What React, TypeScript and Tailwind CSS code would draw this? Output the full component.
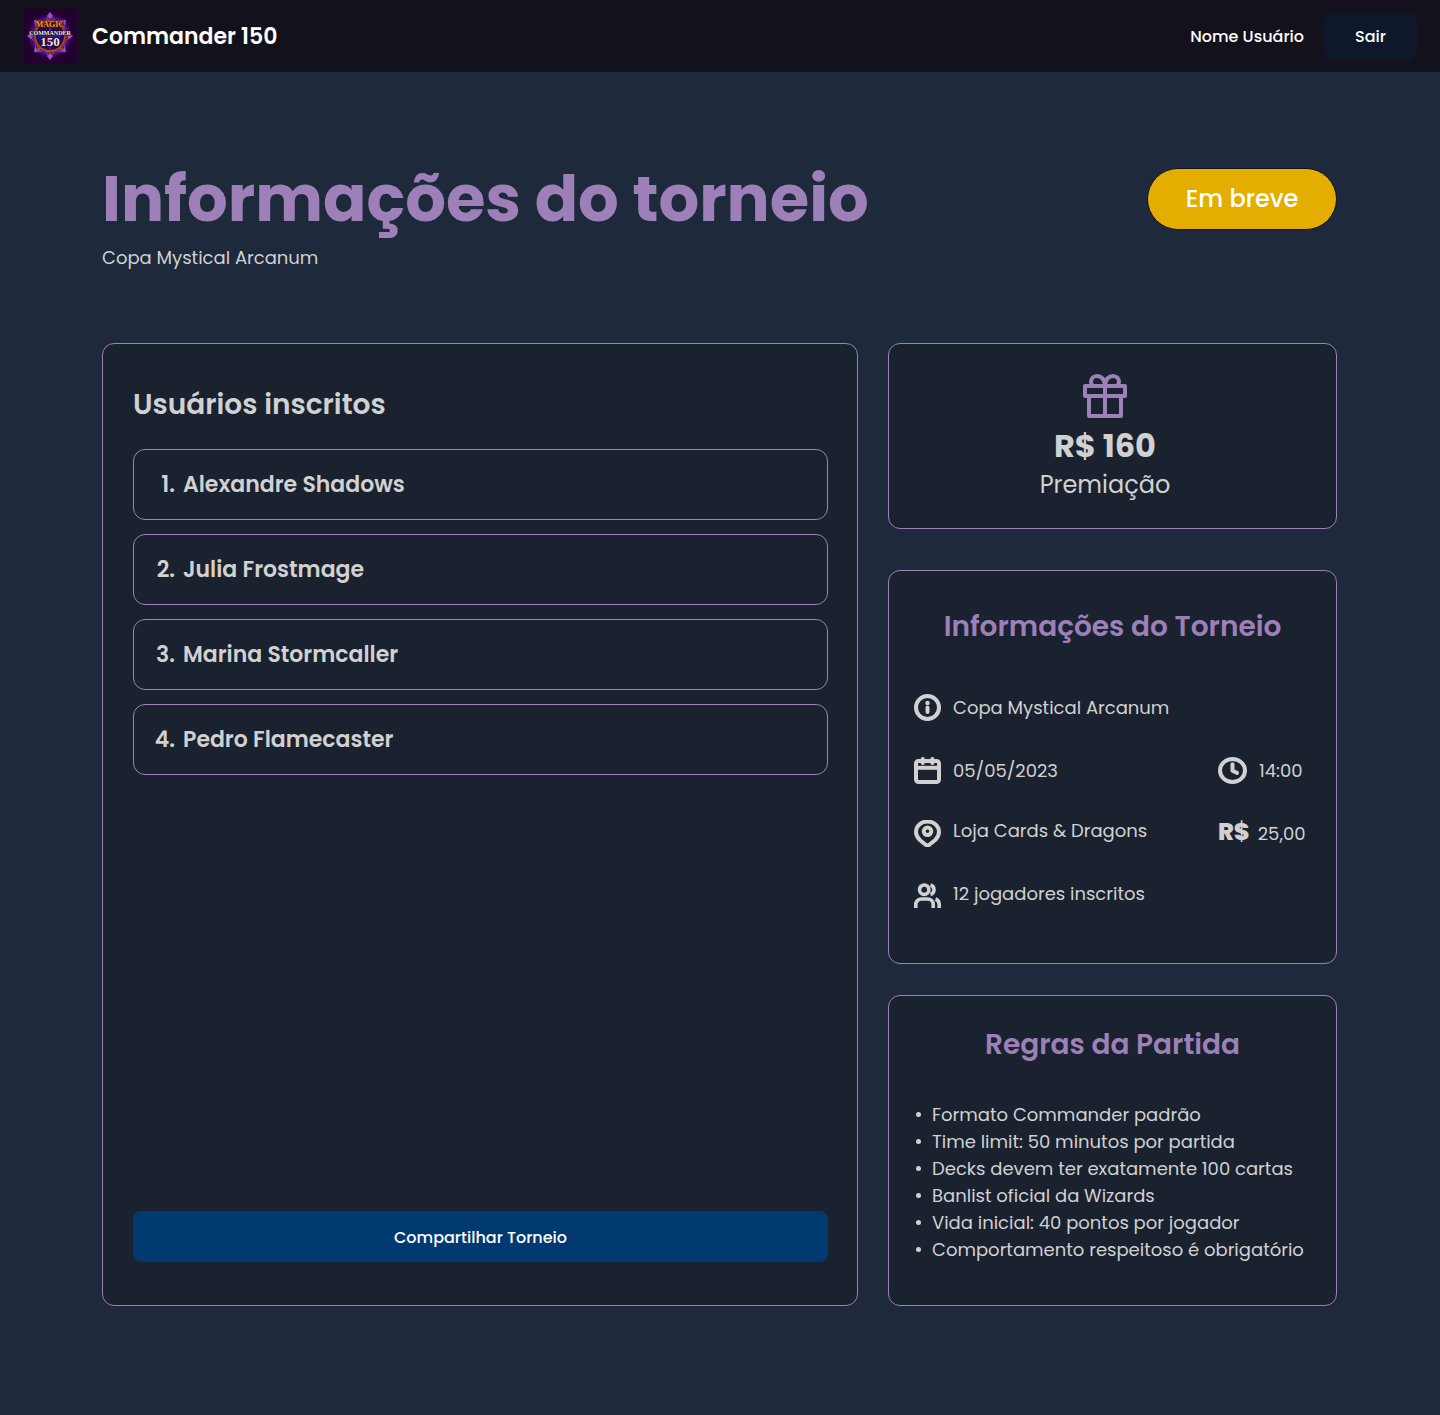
import type { ReactNode } from "react";

const players = ["Alexandre Shadows", "Julia Frostmage", "Marina Stormcaller", "Pedro Flamecaster"];

const rules = [
  "Formato Commander padrão",
  "Time limit: 50 minutos por partida",
  "Decks devem ter exatamente 100 cartas",
  "Banlist oficial da Wizards",
  "Vida inicial: 40 pontos por jogador",
  "Comportamento respeitoso é obrigatório",
];

function Logo() {
  return (
    <svg viewBox="0 0 54 54" className="size-[54px] shrink-0" role="img" aria-label="Magic Commander 150">
      <defs>
        <radialGradient id="glow">
          <stop offset="0" stopColor="#3a0a78" />
          <stop offset="0.6" stopColor="#5a16c4" />
          <stop offset="0.85" stopColor="#4a0f96" stopOpacity="0.7" />
          <stop offset="1" stopColor="#220030" stopOpacity="0" />
        </radialGradient>
      </defs>
      <rect width="54" height="54" fill="#220030" />
      <circle cx="27" cy="27" r="23" fill="url(#glow)" />
      <path d="M27 5l5 7 10-1-1 10 8 6-8 6 1 10-10-1-5 7-5-7-10 1 1-10-8-6 8-6-1-10 10 1z" fill="none" stroke="#8a3a9c" strokeWidth="1" />
      <circle cx="27" cy="27" r="15" fill="#260a55" stroke="#a3481d" strokeWidth="2" />
      <circle cx="27" cy="27" r="16.5" fill="none" stroke="#7a3028" strokeWidth="1.4" strokeDasharray="3 2" />
      <path d="M27 14v26M16 27h22" stroke="#6a22dc" strokeWidth="1.2" />
      <g fill="#a44fc4">
        <path d="M27 3l3 4-3 3-3-3zM27 44l3 3-3 4-3-4zM4 27l4-3 2 3-2 3zM50 27l-4-3-2 3 2 3z" />
        <path d="M11 11l5 1-4 4zM43 11l-5 1 4 4zM11 43l5-1-4-4zM43 43l-5-1 4-4z" />
      </g>
      <g fill="#b0562a">
        <path d="M24 10l3 3 3-3 1 3h-8zM24 44l3-3 3 3 1-3h-8z" />
        <path d="M14 38l4 2-2 2zM40 38l-4 2 2 2zM14 16l3-2-1-2zM40 16l-3-2 1-2z" />
      </g>
      <g textAnchor="middle" fontFamily="'Liberation Serif', serif" fontWeight="700" strokeLinejoin="round" paintOrder="stroke">
        <text x="27" y="18" fontSize="8" fill="#f59a23" stroke="#3a1010" strokeWidth="1">MAGIC</text>
        <text x="27" y="26" fontSize="6" fill="#f3eef3" stroke="#150820" strokeWidth="1">COMMANDER</text>
        <text x="27" y="37" fontSize="13" fill="#f1e6d6" stroke="#150820" strokeWidth="1">150</text>
      </g>
    </svg>
  );
}

function GiftIcon() {
  return (
    <svg viewBox="0 0 44 44" className="size-11" fill="none" stroke="#9d80b8" strokeWidth="4" aria-hidden="true">
      <path d="M2 12h40v10H2zM6 22v20h32V22M22 12v30" strokeLinejoin="round" />
      <path d="M22 11C21 5 18 2 14 2C10 2 8 5 8 8C8 10 9 11 10 12M22 11C23 5 26 2 30 2C34 2 36 5 36 8C36 10 35 11 34 12" />
    </svg>
  );
}

function InfoIcon() {
  return (
    <svg viewBox="0 0 27 27" className="size-[27px]" fill="none" stroke="currentColor" strokeWidth="4" strokeLinecap="round" aria-hidden="true">
      <circle cx="13.5" cy="13.5" r="11.5" />
      <path d="M13.5 13.5v4.500" />
      <circle cx="13.5" cy="9" r="2.200" fill="currentColor" stroke="none" />
    </svg>
  );
}

function CalendarIcon() {
  return (
    <svg viewBox="0 0 27 27" className="size-[27px]" fill="none" stroke="currentColor" strokeWidth="4" strokeLinejoin="round" strokeLinecap="round" aria-hidden="true">
      <rect x="2" y="4" width="23" height="21" rx="2.500" />
      <path d="M2 10.800h23" strokeLinecap="butt" />
      <path d="M8.800 2v4M18.300 2v4" />
    </svg>
  );
}

function PinIcon() {
  return (
    <svg viewBox="0 0 27 27" className="size-[27px]" fill="none" stroke="currentColor" strokeWidth="4" strokeLinejoin="round" aria-hidden="true">
      <path d="M13.500 1.500C7 1.500 2 6 2 12c0 3.200 1.600 5.800 3.800 8l6.200 5q1.500 1 3 0l6.200-5C23.400 17.800 25 15.200 25 12C25 6 20 1.500 13.500 1.500z" />
      <circle cx="13.500" cy="11.300" r="3.800" />
    </svg>
  );
}

function UsersIcon() {
  return (
    <svg viewBox="0 0 27 27" className="size-[27px]" fill="none" stroke="currentColor" strokeWidth="3.600" aria-hidden="true">
      <circle cx="10.200" cy="6.700" r="4.700" />
      <path d="M1.800 25v-3.500a5.500 5.500 0 0 1 5.500-5.500h6.400a5.500 5.500 0 0 1 5.500 5.500v3.500" />
      <path d="M16.500 2a4.900 4.900 0 0 1 0 9.400M21.500 16c2.600.9 3.700 3 3.700 5.500v3.500" />
    </svg>
  );
}

function ClockIcon() {
  return (
    <svg viewBox="0 0 29 27" className="h-[27px] w-[29px]" fill="none" stroke="currentColor" strokeWidth="4" strokeLinecap="round" strokeLinejoin="round" aria-hidden="true">
      <ellipse cx="14.500" cy="13.500" rx="12.500" ry="11.500" />
      <path d="M14.500 7.200v6.500l4.500 2.200" />
    </svg>
  );
}

function Card({ children, className }: { children: ReactNode; className: string }) {
  return <section className={`rounded-xl border border-[#9d80b8] bg-[#1a2230] ${className}`}>{children}</section>;
}

function Info({ icon, raised, children }: { icon: ReactNode; raised?: boolean; children: ReactNode }) {
  return (
    <div className={raised ? "flex items-start gap-3 leading-[22px]" : "flex items-center gap-3"}>
      {icon}
      <span>{children}</span>
    </div>
  );
}

export default function App() {
  return (
    <div className="min-h-screen bg-[#1e293b] font-[Poppins,Inter,sans-serif] text-[#d1d1d1]">
      <header className="flex h-[72px] items-center justify-between bg-[#13111c] px-[23px] text-white">
        <div className="flex items-center gap-[15px]">
          <Logo />
          <span className="text-[22px] font-semibold">Commander 150</span>
        </div>
        <div className="flex items-center gap-5">
          <span className="pt-0.5 text-base font-medium">Nome Usuário</span>
          <button type="button" className="h-[47px] w-[93px] rounded-lg bg-[#0f172a] pt-0.5 text-base font-medium">Sair</button>
        </div>
      </header>

      <main className="pt-[89px] pr-[103px] pb-[109px] pl-[102px]">
        <div className="flex items-start justify-between">
          <div>
            <h1 className="text-[64px] leading-[76px] font-bold text-[#9d80b8]">Informações do torneio</h1>
            <p className="mt-[7px] text-lg leading-[27px]">Copa Mystical Arcanum</p>
          </div>
          <span className="mt-[7px] flex h-[62px] w-[190px] items-center justify-center rounded-full border border-[#14111d] bg-[#e3ae00] text-2xl font-medium text-white">
            Em breve
          </span>
        </div>

        <div className="mt-[72px] grid grid-cols-[minmax(0,756fr)_minmax(0,449fr)] gap-[30px]">
          <Card className="flex flex-col pt-[39px] pr-[29px] pb-[43px] pl-[30px]">
            <h2 className="text-[28px] leading-[44px] font-semibold">Usuários inscritos</h2>
            <ol className="mt-[22px] flex flex-col gap-[14px]">
              {players.map((name, i) => (
                <li key={name} className="flex h-[71px] items-center gap-2 rounded-xl border border-[#9d80b8] pl-5 text-[22px] font-semibold">
                  <span className="w-[21px] text-right">{i + 1}.</span>
                  <span>{name}</span>
                </li>
              ))}
            </ol>
            <button type="button" className="mt-auto h-[51px] rounded-lg bg-[#003a70] pt-0.5 text-base font-medium text-white">
              Compartilhar Torneio
            </button>
          </Card>

          <div className="flex flex-col">
            <Card className="flex flex-col items-center pt-[30px] pr-[15px] pb-[25px]">
              <GiftIcon />
              <strong className="mt-2 text-[32px] leading-[40px] font-bold">R$ 160</strong>
              <span className="text-2xl leading-[37px]">Premiação</span>
            </Card>

            <Card className="mt-[41px] px-[25px] pt-[34px] pb-[53px]">
              <h2 className="text-center text-[28px] leading-[44px] font-semibold text-[#9d80b8]">Informações do Torneio</h2>
              <div className="mt-[45px] grid auto-rows-[27px] grid-cols-[1fr_93px] gap-y-[36px] text-lg leading-[27px]">
                <div className="col-span-2">
                  <Info icon={<InfoIcon />}>Copa Mystical Arcanum</Info>
                </div>
                <Info icon={<CalendarIcon />}>05/05/2023</Info>
                <Info icon={<ClockIcon />}>14:00</Info>
                <Info icon={<PinIcon />} raised>Loja Cards &amp; Dragons</Info>
                <div className="flex items-baseline gap-2 leading-6">
                  <strong className="text-2xl leading-6 font-extrabold">R$</strong>
                  <span>25,00</span>
                </div>
                <div className="col-span-2">
                  <Info icon={<UsersIcon />} raised>12 jogadores inscritos</Info>
                </div>
              </div>
            </Card>

            <Card className="mt-[31px] px-[25px] pt-[27px] pb-[42px]">
              <h2 className="text-center text-[28px] leading-[44px] font-semibold text-[#9d80b8]">Regras da Partida</h2>
              <ul className="mt-[34px] text-lg leading-[27px]">
                {rules.map((rule) => (
                  <li key={rule} className="flex items-center gap-[11px]">
                    <span className="ml-[2px] size-[5px] shrink-0 rounded-full bg-[#d1d1d1]" />
                    {rule}
                  </li>
                ))}
              </ul>
            </Card>
          </div>
        </div>
      </main>
    </div>
  );
}
